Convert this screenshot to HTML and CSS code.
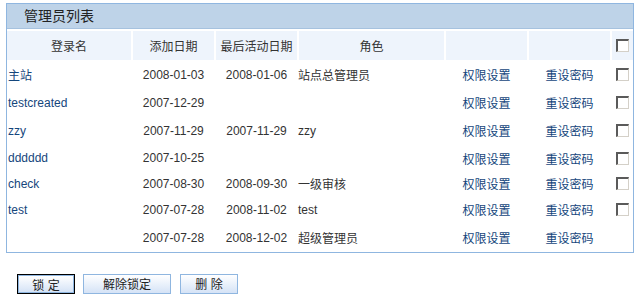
FILE: index.html
```html
<!DOCTYPE html>
<html lang="zh-CN">
<head>
    <meta charset="UTF-8">
    <title>管理员列表</title>
    <link rel="stylesheet" href="styles.css">
</head>
<body>
    <div class="panel">
        <div class="panel-title">管理员列表</div>
        <table class="admin-list">
            <colgroup>
                <col class="col-name">
                <col class="col-date">
                <col class="col-date">
                <col class="col-role">
                <col class="col-act">
                <col class="col-act">
                <col class="col-check">
            </colgroup>
            <thead>
                <tr>
                    <th>登录名</th>
                    <th>添加日期</th>
                    <th>最后活动日期</th>
                    <th>角色</th>
                    <th></th>
                    <th></th>
                    <th class="last"><input type="checkbox" class="chk"></th>
                </tr>
            </thead>
            <tbody>
                <tr class="r1">
                    <td class="name"><a href="#">主站</a></td>
                    <td class="c">2008-01-03</td>
                    <td class="c">2008-01-06</td>
                    <td>站点总管理员</td>
                    <td class="c"><a href="#">权限设置</a></td>
                    <td class="c"><a href="#">重设密码</a></td>
                    <td class="c"><input type="checkbox" class="chk"></td>
                </tr>
                <tr class="r2">
                    <td class="name"><a href="#">testcreated</a></td>
                    <td class="c">2007-12-29</td>
                    <td class="c"></td>
                    <td></td>
                    <td class="c"><a href="#">权限设置</a></td>
                    <td class="c"><a href="#">重设密码</a></td>
                    <td class="c"><input type="checkbox" class="chk"></td>
                </tr>
                <tr class="r3">
                    <td class="name"><a href="#">zzy</a></td>
                    <td class="c">2007-11-29</td>
                    <td class="c">2007-11-29</td>
                    <td>zzy</td>
                    <td class="c"><a href="#">权限设置</a></td>
                    <td class="c"><a href="#">重设密码</a></td>
                    <td class="c"><input type="checkbox" class="chk"></td>
                </tr>
                <tr class="r4">
                    <td class="name"><a href="#">dddddd</a></td>
                    <td class="c">2007-10-25</td>
                    <td class="c"></td>
                    <td></td>
                    <td class="c"><a href="#">权限设置</a></td>
                    <td class="c"><a href="#">重设密码</a></td>
                    <td class="c"><input type="checkbox" class="chk"></td>
                </tr>
                <tr class="r5">
                    <td class="name"><a href="#">check</a></td>
                    <td class="c">2007-08-30</td>
                    <td class="c">2008-09-30</td>
                    <td>一级审核</td>
                    <td class="c"><a href="#">权限设置</a></td>
                    <td class="c"><a href="#">重设密码</a></td>
                    <td class="c"><input type="checkbox" class="chk"></td>
                </tr>
                <tr class="r6">
                    <td class="name"><a href="#">test</a></td>
                    <td class="c">2007-07-28</td>
                    <td class="c">2008-11-02</td>
                    <td>test</td>
                    <td class="c"><a href="#">权限设置</a></td>
                    <td class="c"><a href="#">重设密码</a></td>
                    <td class="c"><input type="checkbox" class="chk"></td>
                </tr>
                <tr class="r7">
                    <td class="name"></td>
                    <td class="c">2007-07-28</td>
                    <td class="c">2008-12-02</td>
                    <td>超级管理员</td>
                    <td class="c"><a href="#">权限设置</a></td>
                    <td class="c"><a href="#">重设密码</a></td>
                    <td class="c"></td>
                </tr>
            </tbody>
        </table>
    </div>

    <div class="actions">
        <button class="btn btn-default">锁 定</button>
        <button class="btn btn-wide">解除锁定</button>
        <button class="btn">删 除</button>
    </div>
</body>
</html>
```

FILE: styles.css
```css
body {
    margin: 0;
    padding: 3px 0 0 6px;
    background-color: #ffffff;
    color: #333333;
    font-family: 'Liberation Sans', 'Noto Sans CJK SC', sans-serif;
    font-size: 12px;
}

.panel {
    width: 626px;
    border: 1px solid #8fb6e0;
}

.panel-title {
    height: 24px;
    line-height: 24px;
    padding-left: 17px;
    background-color: #bed3e8;
    border-bottom: 1px solid #a6c2df;
    color: #222222;
    font-size: 14px;
    margin-bottom: 2px;
}

.admin-list {
    width: 626px;
    border-collapse: collapse;
    table-layout: fixed;
}

.col-name { width: 125px; }
.col-date { width: 83px; }
.col-role { width: 147px; }
.col-act { width: 83px; }
.col-check { width: 22px; }

.admin-list th {
    height: 29px;
    padding: 0;
    background-color: #eef4fc;
    border-right: 2px solid #ffffff;
    border-bottom: 1px solid #ffffff;
    font-weight: normal;
    color: #333333;
    text-align: center;
}

.admin-list th.last {
    border-right: none;
}

.admin-list td {
    padding: 0;
    white-space: nowrap;
    vertical-align: middle;
}

.admin-list td.c {
    text-align: center;
}

.admin-list td.name {
    padding-left: 1px;
}

.r1, .r2, .r3, .r6, .r7 { height: 28px; }
.r4 { height: 27px; }
.r5 { height: 24px; }

.admin-list a {
    color: #15467c;
    text-decoration: none;
}

.chk {
    appearance: none;
    -webkit-appearance: none;
    display: block;
    margin: 0 auto;
    width: 13px;
    height: 13px;
    box-sizing: border-box;
    background-color: #ffffff;
    border-top: 2px solid #5a5a5a;
    border-left: 2px solid #5a5a5a;
    border-right: 1px solid #d4d0c8;
    border-bottom: 1px solid #d4d0c8;
}

.actions {
    display: flex;
    gap: 9px;
    margin-top: 21px;
    padding-left: 11px;
}

.btn {
    height: 20px;
    width: 58px;
    padding: 0;
    border: 1px solid #8fb6e0;
    background: linear-gradient(to bottom, #ffffff 0%, #d5e3f6 100%);
    color: #222222;
    font-family: 'Liberation Sans', 'Noto Sans CJK SC', sans-serif;
    font-size: 12px;
}

.btn-wide {
    width: 88px;
}

.btn-default {
    outline: 1px solid #000000;
    border-color: #8fb6e0;
    width: 56px;
    margin-left: 1px;
    margin-top: 1px;
    height: 18px;
}
```
